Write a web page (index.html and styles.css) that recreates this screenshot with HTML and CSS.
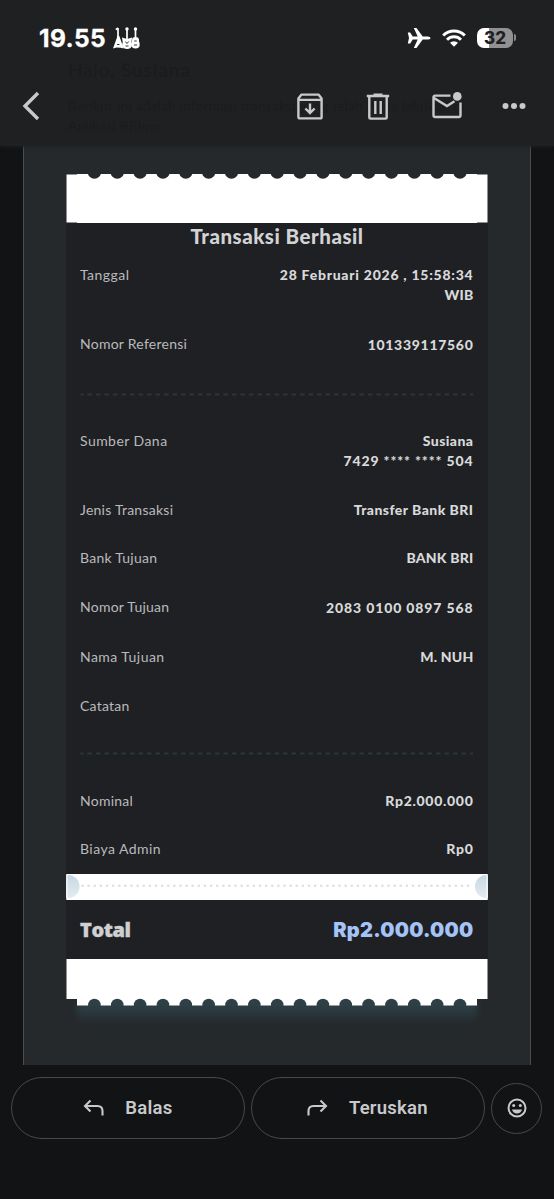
FILE: index.html
```html
<!DOCTYPE html>
<html lang="id">
<head>
<meta charset="utf-8">
<title>Transaksi Berhasil</title>
<link rel="stylesheet" href="styles.css">
</head>
<body>
<div class="screen">
  <header class="header">
    <div class="under">
      <p class="under-title">Halo, <b>Susiana</b></p>
      <p class="under-text">Berikut ini adalah informasi transaksi yang telah Anda lakukan di Aplikasi BRImo.</p>
    </div>
    <div class="status">
      <span class="time">19.55</span>
      <svg class="guitars" viewBox="0 0 27 22" width="27" height="22">
        <g fill="none" stroke="#fff" stroke-width="1.700"><path d="M5 1v13M14 1v12M22.500 1v12M2.800 2.600L5 1"/></g>
        <g fill="#fff"><circle cx="14" cy="2" r="1.700"/><circle cx="22.500" cy="2" r="1.700"/><path d="M4.500 9h1.800l4.400 12.500-3-.8-4-.2-3.700 1z"/><path d="M9 10.500l5 1.500 5-1.500-.5 4.500.6 3q-.8 4-5 4t-5-4l.6-3z"/><path d="M22.500 10q3.500 0 3.500 3-.2 1.200.3 2 1.700 6.500-3.800 6.500T18.700 15q.6-.8.300-2 0-3 3.500-3z"/></g>
        <g fill="none" stroke="#1f2022" stroke-width=".9"><path d="M4 17.500h2.500M12.300 14.500l1.700 2 1.700-2M12.500 19h3M21.300 14h2.400M21 18h3"/></g>
      </svg>
      <span class="spacer"></span>
      <svg class="plane" viewBox="0 0 24 22" width="24" height="22"><path fill="#fff" d="M.8 5.500h2.400l2.500 3.900h5L6.800 1h2.700l6.200 8.400h5q2.700.1 2.900 1.600-.2 1.500-2.900 1.600h-5L9.500 21H6.800l3.900-8.400h-5l-2.500 3.900H.8L2 11z"/></svg>
      <svg class="wifi" viewBox="0 0 24 18" width="24" height="18"><g fill="none" stroke="#fff" stroke-width="3"><path d="M1.200 6.500a15.300 15.300 0 0 1 21.600 0"/><path d="M5 10.700a9.900 9.900 0 0 1 14 0"/></g><path fill="#fff" d="M12 17.800l-4-4a5.700 5.700 0 0 1 8 0z"/></svg>
      <span class="battery"><span>32</span></span><span class="cap"></span>
    </div>
    <nav class="tools">
      <svg class="back" viewBox="0 0 18 30" width="18" height="30"><path d="M16 2L3 15l13 13" fill="none" stroke="#c8c9cb" stroke-width="3.400"/></svg>
      <span class="spacer"></span>
      <svg class="archive" viewBox="0 0 26 27" width="26" height="27"><g fill="none" stroke="#c8c9cb" stroke-width="2.400"><path d="M4.500 1.600h17l3.100 3.800V24q0 1.400-1.400 1.400H2.800Q1.400 25.400 1.400 24V5.400zM1.400 6.900h23.200" stroke-linejoin="round"/><path d="M13 10.500v9M8.400 15.500L13 20l4.600-4.500"/></g></svg>
      <svg class="trash" viewBox="0 0 24 27" width="24" height="27"><g fill="none" stroke="#c8c9cb" stroke-width="2.400"><path d="M.8 3h22.400M7.500 1.800h9"/><path d="M3.300 3v21.300q0 1.300 1.300 1.300h14.800q1.300 0 1.300-1.300V3" /><path d="M9.300 8v13M14.700 8v13"/></g></svg>
      <svg class="mail" viewBox="0 0 30 28" width="30" height="28"><g fill="none" stroke="#c8c9cb" stroke-width="2.400"><path d="M18.500 4.600H3.200q-1.700 0-1.700 1.700v18q0 1.700 1.700 1.700h23.600q1.700 0 1.700-1.700V11.500M2 7l13 8 7.500-4.700"/></g><circle cx="25.300" cy="5.400" r="4.300" fill="#c8c9cb"/></svg>
      <svg class="dots" viewBox="0 0 24 8" width="24" height="8"><g fill="#c8c9cb"><circle cx="3.500" cy="4" r="3"/><circle cx="12" cy="4" r="3"/><circle cx="20.500" cy="4" r="3"/></g></svg>
    </nav>
  </header>

  <main class="mail-body">
    <article class="receipt">
      <svg class="edge-top" viewBox="0 0 422 49" width="422" height="49">
        <path fill="#25292b" d="M0 0h422v2H0z"/>
        <path fill="#fff" d="M.5 .5H11V0h400v.5h10.500V48.500H411V49H11v-.5H.5z"/>
        <g fill="#25292b"><circle cx="28.400" cy="-2" r="6.700"/><circle cx="51.250" cy="-2" r="6.700"/><circle cx="74.100" cy="-2" r="6.700"/><circle cx="96.950" cy="-2" r="6.700"/><circle cx="119.800" cy="-2" r="6.700"/><circle cx="142.650" cy="-2" r="6.700"/><circle cx="165.500" cy="-2" r="6.700"/><circle cx="188.350" cy="-2" r="6.700"/><circle cx="211.200" cy="-2" r="6.700"/><circle cx="234.050" cy="-2" r="6.700"/><circle cx="256.900" cy="-2" r="6.700"/><circle cx="279.750" cy="-2" r="6.700"/><circle cx="302.600" cy="-2" r="6.700"/><circle cx="325.450" cy="-2" r="6.700"/><circle cx="348.300" cy="-2" r="6.700"/><circle cx="371.150" cy="-2" r="6.700"/><circle cx="394" cy="-2" r="6.700"/></g>
      </svg>
      <h1 class="title">Transaksi Berhasil</h1>
      <dl class="rows">
        <div class="row r-date"><dt>Tanggal</dt><dd class="wide">28 Februari 2026 , 15:58:34<br><span class="tight">WIB</span></dd></div>
        <div class="row r-ref"><dt class="narrow">Nomor Referensi</dt><dd class="ref low">101339117560</dd></div>
      </dl>
      <svg class="dash" viewBox="0 0 393 3" width="393" height="3"><path d="M.5 1.500H393" stroke="#303437" stroke-width="2.200" stroke-dasharray="4.500 4" stroke-dashoffset="1.500"/></svg>
      <dl class="rows second">
        <div class="row r-source"><dt>Sumber Dana</dt><dd>Susiana<br><span class="card">7429 **** **** 504</span></dd></div>
        <div class="row"><dt class="narrow">Jenis Transaksi</dt><dd>Transfer Bank BRI</dd></div>
        <div class="row r-bank"><dt class="narrow">Bank Tujuan</dt><dd class="tight">BANK BRI</dd></div>
        <div class="row r-target"><dt class="narrow">Nomor Tujuan</dt><dd class="card low">2083 0100 0897 568</dd></div>
        <div class="row"><dt>Nama Tujuan</dt><dd class="tight">M. NUH</dd></div>
        <div class="row r-note"><dt class="narrow">Catatan</dt><dd></dd></div>
      </dl>
      <svg class="dash" viewBox="0 0 393 3" width="393" height="3"><path d="M.5 1.500H393" stroke="#2b3637" stroke-width="2.200" stroke-dasharray="4.500 4" stroke-dashoffset="1.500"/></svg>
      <dl class="rows third">
        <div class="row"><dt class="narrow">Nominal</dt><dd class="ref">Rp2.000.000</dd></div>
        <div class="row r-fee"><dt>Biaya Admin</dt><dd class="ref">Rp0</dd></div>
      </dl>
      <svg class="tear" viewBox="0 0 422 26" width="422" height="26">
        <defs><linearGradient id="disc" x1="0" y1="0" x2="0" y2="1"><stop offset="0" stop-color="#c6d7e2"/><stop offset="1" stop-color="#e4ecf0"/></linearGradient></defs>
        <path fill="#fff" d="M.5 0h421v26H.5z"/>
        <circle cx="2" cy="12.500" r="11.500" fill="url(#disc)"/><circle cx="420.500" cy="12.500" r="11.500" fill="url(#disc)"/>
        <path d="M1 0v26M421 0v26" stroke="#fff"/>
        <path d="M16.500 11.800H408" stroke="#d8e3e8" stroke-width="2.600" stroke-linecap="round" stroke-dasharray=".1 6.020"/>
      </svg>
      <div class="total"><span>Total</span><strong>Rp2.000.000</strong></div>
      <div class="bottom">
        <svg class="edge-bottom" viewBox="0 0 422 47" width="422" height="47">
          <path fill="#fff" d="M.5 0h421v40H411v6.500H11V40H.5z"/>
          <clipPath id="lower"><path d="M0 38h422v9H0z"/></clipPath>
          <g fill="#2e4045" clip-path="url(#lower)"><circle cx="28.400" cy="46" r="6.300"/><circle cx="51.250" cy="46" r="6.300"/><circle cx="74.100" cy="46" r="6.300"/><circle cx="96.950" cy="46" r="6.300"/><circle cx="119.800" cy="46" r="6.300"/><circle cx="142.650" cy="46" r="6.300"/><circle cx="165.500" cy="46" r="6.300"/><circle cx="188.350" cy="46" r="6.300"/><circle cx="211.200" cy="46" r="6.300"/><circle cx="234.050" cy="46" r="6.300"/><circle cx="256.900" cy="46" r="6.300"/><circle cx="279.750" cy="46" r="6.300"/><circle cx="302.600" cy="46" r="6.300"/><circle cx="325.450" cy="46" r="6.300"/><circle cx="348.300" cy="46" r="6.300"/><circle cx="371.150" cy="46" r="6.300"/><circle cx="394" cy="46" r="6.300"/></g>
        </svg>
        <div class="glow"></div>
      </div>
    </article>
  </main>

  <footer class="actions">
    <button class="pill reply"><svg viewBox="0 0 22 18" width="22" height="18"><path d="M7.500 1.500L2 7l5.500 5.500M2 7h12.500q5 0 5 5v4.500" fill="none" stroke="#c8c9cb" stroke-width="2.100"/></svg><span>Balas</span></button>
    <button class="pill forward"><svg viewBox="0 0 22 18" width="22" height="18"><path d="M14.500 1.500L20 7l-5.500 5.500M20 7H7.500q-5 0-5 5v4.500" fill="none" stroke="#c8c9cb" stroke-width="2.100"/></svg><span>Teruskan</span></button>
    <button class="emoji"><svg viewBox="0 0 20 20" width="20" height="20"><circle cx="10" cy="10" r="8.500" fill="none" stroke="#c8c9cb" stroke-width="2"/><g fill="#c8c9cb"><circle cx="6.700" cy="7.500" r="1.500"/><circle cx="13.300" cy="7.500" r="1.500"/><path d="M5 11.500h10q-1.200 4-5 4t-5-4z"/></g></svg></button>
  </footer>
</div>
</body>
</html>
```
FILE: styles.css
```css
* { box-sizing: border-box; }
body { margin: 0; background: #121315; font-family: Lato, "Open Sans", sans-serif; }
svg { display: block; flex: none; }
.screen { width: 554px; height: 1199px; overflow: hidden; display: flex; flex-direction: column; background: #121315; }

.header { position: relative; z-index: 1; height: 146px; flex: none; background: #1f2022; box-shadow: 0 1px 4px rgba(31, 32, 34, .8); }
.under { position: absolute; left: 68px; top: 58px; width: 420px; color: #1b1c1e; }
.under p { margin: 0; }
.under-title { font-size: 19px; line-height: 24px; letter-spacing: .8px; }
.under-text { font-size: 13.500px; line-height: 20px; padding-top: 14px; letter-spacing: .3px; }
.status { position: relative; display: flex; align-items: center; height: 74px; padding: 1px 38px 0 39px; }
.spacer { flex: 1; }
.time { font: 700 24.500px/30px Inter, sans-serif; color: #fff; width: 68px; letter-spacing: .4px; -webkit-text-stroke: .3px; }
.guitars { margin: 0 0 0 6px; }
.plane { margin-right: 11px; }
.wifi { margin-right: 11px; }
.battery { width: 36px; height: 20px; border-radius: 7px; background: linear-gradient(90deg, #fff 33%, #919193 33%); color: #1f2022; font: 800 17px/20px Inter, sans-serif; text-align: center; }
.cap { width: 2px; height: 7px; margin-left: 1px; border-radius: 0 2px 2px 0; background: #88898b; }
.tools { position: relative; display: flex; align-items: center; height: 64px; padding: 0 28px 0 22px; }
.archive { margin-right: 43px; }
.trash { margin-right: 42px; }
.mail { margin-right: 40px; margin-top: -3px; }

.mail-body { flex: none; width: 508px; height: 919px; margin-left: 23px; padding: 28px 42px 0; border-left: 1px solid #4b4d4f; border-right: 1px solid #4b4d4f; background: #25292b; }
.receipt { width: 422px; background: #1f2023; height: 785px; }
.title { margin: 0; height: 42px; text-align: center; font-size: 20.500px; line-height: 26px; font-weight: 900; letter-spacing: .5px; color: #d2d3d4; }
.rows { margin: 0; padding: 0 14.500px 0 14px; }
.row { display: flex; justify-content: space-between; height: 48.500px; font-size: 14px; line-height: 20px; letter-spacing: .45px; }
dt { color: #b9babc; }
.narrow { letter-spacing: .25px; }
dd { margin: 0; color: #d8d9da; font-weight: 900; text-align: right; }
.tight { letter-spacing: .2px; }
.wide { letter-spacing: .75px; }
.ref { letter-spacing: .7px; }
.card { letter-spacing: .87px; }
.low { padding-top: 1px; }
.r-date { height: 68.500px; }
.r-ref { height: 59.500px; }
.dash { margin-left: 14px; }
.second { padding-top: 35px; }
.r-source { height: 68.500px; }
.r-target { height: 50.500px; }
.r-note { height: 56px; }
.third { padding-top: 36px; }
.r-fee { height: 34.500px; }
.total { display: flex; justify-content: space-between; align-items: center; height: 59px; padding: 2px 14.500px 0 14px; font: 800 20px/28px "Open Sans", sans-serif; letter-spacing: -.4px; color: #cfd0d1; -webkit-text-stroke: .4px; }
.total strong { color: #a4c3f7; font: 900 20px/28px Inter, sans-serif; letter-spacing: .25px; -webkit-text-stroke: 0; }
.bottom { position: relative; height: 47px; background: #25292b; }
.glow { height: 20px; margin: -3px 11px 0; background: linear-gradient(#2f464e, #25292b); filter: blur(3px); }
.edge-bottom { position: relative; z-index: 1; }

.actions { display: flex; align-items: center; gap: 6px; height: 86px; padding: 0 11.400px; }
.pill, .emoji { display: flex; align-items: center; justify-content: center; padding: 0; background: transparent; border: 1.500px solid #48494b; color: #c8c9cb; }
.pill { width: 234px; height: 62px; border-radius: 31px; font: 600 18.500px/24px Roboto, sans-serif; letter-spacing: .25px; }
.reply { gap: 20px; padding-right: 1px; }
.forward { gap: 21px; padding-right: 3px; }
.emoji { width: 51px; height: 51px; border-radius: 50%; }
```
